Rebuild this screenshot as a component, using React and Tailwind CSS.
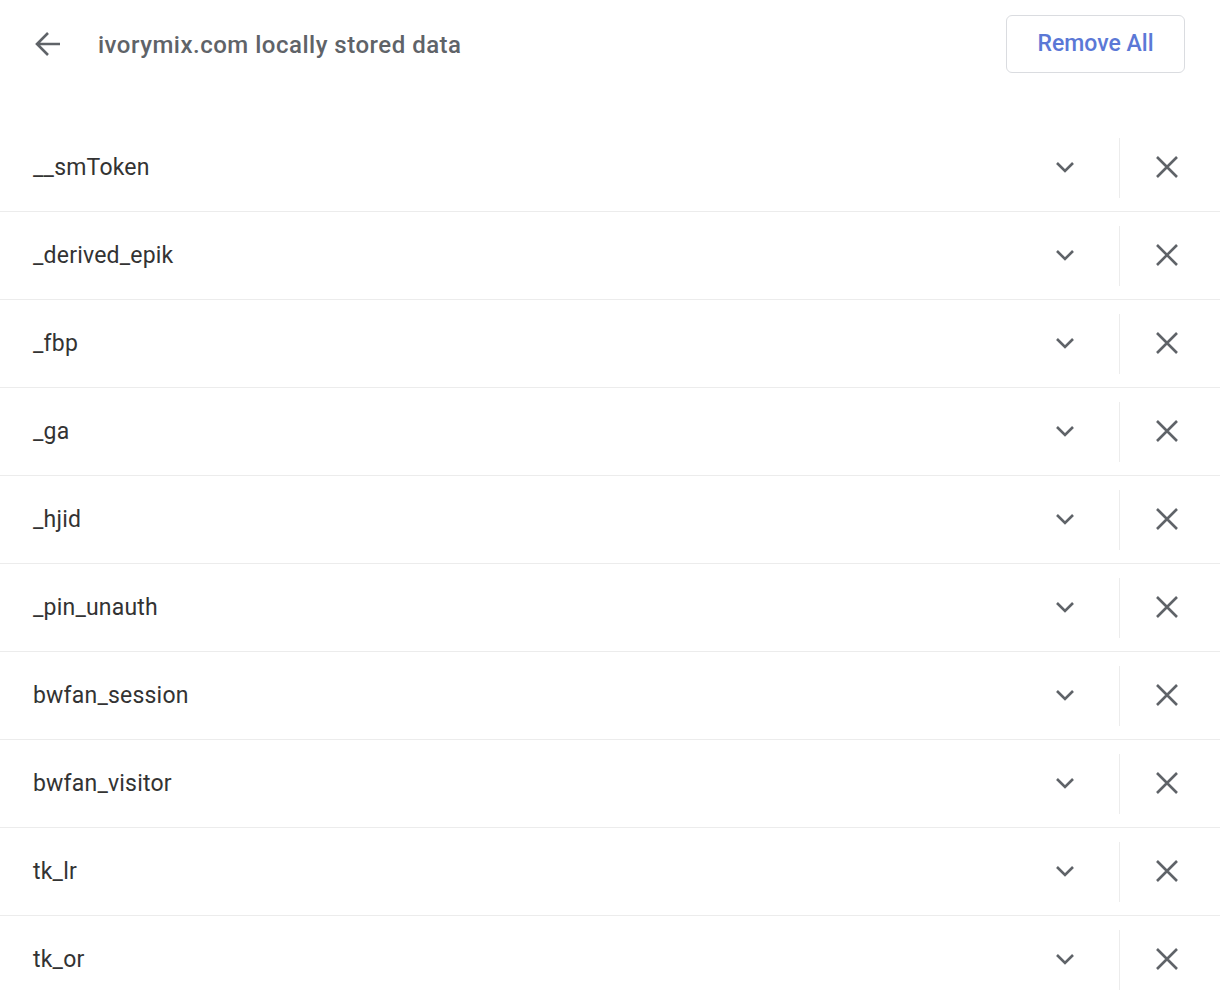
import React from 'react';

const items = [
  '__smToken',
  '_derived_epik',
  '_fbp',
  '_ga',
  '_hjid',
  '_pin_unauth',
  'bwfan_session',
  'bwfan_visitor',
  'tk_lr',
  'tk_or',
];

function Chevron() {
  return (
    <svg width="20" height="14" viewBox="0 0 20 14" fill="none">
      <path d="M2 3 L10 11 L18 3" stroke="#5f6368" strokeWidth="2.6" />
    </svg>
  );
}

function Cross() {
  return (
    <svg width="24" height="24" viewBox="0 0 24 24" fill="none">
      <path d="M2 2 L22 22 M22 2 L2 22" stroke="#5f6368" strokeWidth="2.6" />
    </svg>
  );
}

function Row({ name }) {
  return (
    <div className="flex items-center h-[88px] border-b border-[#ececec] pl-[33px]">
      <span className="flex-1 text-[23px] text-[#333333] tracking-[0.2px] pt-[2px]">{name}</span>
      <button className="w-[52px] h-[52px] flex items-center justify-center mr-[28px] mb-[2px]">
        <Chevron />
      </button>
      <div className="w-px h-[60px] bg-[#ececec]"></div>
      <button className="w-[52px] h-[52px] flex items-center justify-center ml-[21px] mr-[27px] mb-[2px]">
        <Cross />
      </button>
    </div>
  );
}

export default function App() {
  return (
    <div className="bg-white w-[1220px] h-[993px] overflow-hidden" style={{ fontFamily: 'Roboto, "Noto Sans", sans-serif' }}>
      <div className="flex items-center h-[88px] pl-[34px] pr-[35px]">
        <svg width="28" height="28" viewBox="0 0 28 28" fill="none">
          <path d="M26 14 H4 M14 3 L3 14 L14 25" stroke="#5f6368" strokeWidth="2.6" />
        </svg>
        <h1 className="ml-[36px] flex-1 text-[24px] font-medium text-[#5f6368] tracking-[0.5px] pt-[1px]">
          ivorymix.com locally stored data
        </h1>
        <button className="w-[179px] h-[58px] rounded-[6px] border border-[#dadce0] text-[23px] font-medium text-[#5b78d6] pt-[1px]">
          Remove All
        </button>
      </div>
      <div className="mt-[36px]">
        {items.map((n) => (
          <Row key={n} name={n} />
        ))}
      </div>
    </div>
  );
}
